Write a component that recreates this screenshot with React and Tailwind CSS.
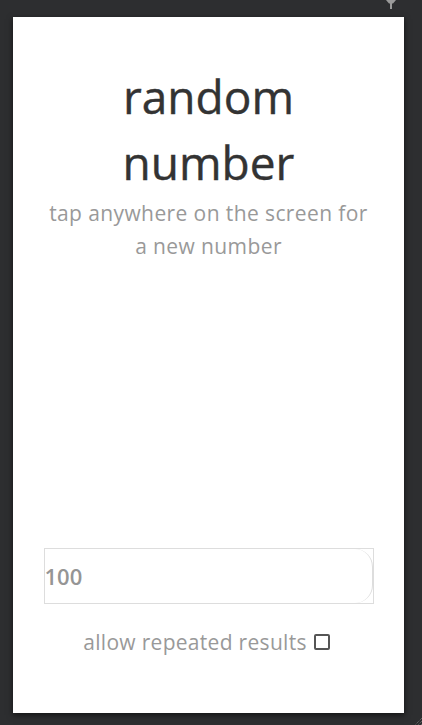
import React, { useState } from 'react';

const App = () => {
  const [max, setMax] = useState('100');
  const [repeat, setRepeat] = useState(false);

  return (
    <div className="relative w-[422px] h-[725px] bg-[#2d2e30] overflow-hidden" style={{ fontFamily: '"Open Sans", "Noto Sans", sans-serif' }}>

      {/* pin icon top right */}
      <svg className="absolute left-[385px] top-0 w-[12px] h-[9px]" viewBox="0 0 12 9">
        <path d="M1 0h10l-3 3.5h-1v5.5h-2v-5.5h-1z" fill="#9a9a9a" />
      </svg>

      {/* app panel */}
      <div className="ml-[13px] mt-[17px] w-[391px] h-[696px] bg-white shadow-[0_2px_6px_rgba(0,0,0,0.6)] flex flex-col items-center">

        <h1 className="mt-[46px] text-[46px] leading-[66px] text-[#333333] text-center font-normal [-webkit-text-stroke:0.4px_#333333]">
          random<br />number
        </h1>
        <p className="mt-[2px] w-[360px] text-[21px] leading-[33px] tracking-[0.4px] text-[#999999] text-center">
          tap anywhere on the screen for<br />a new number
        </p>

        <div className="flex-1" />

        {/* max number input */}
        <div className="w-[330px] h-[56px] border border-[#dddddd] flex">
          <input
            type="text"
            value={max}
            onChange={(e) => setMax(e.target.value)}
            className="w-full h-full rounded-r-[18px] border-r border-[#dddddd] pl-0 text-[22px] font-semibold text-[#959595] outline-none bg-transparent"
          />
        </div>

        {/* repeat toggle */}
        <label className="mt-[23px] mb-[55px] mr-[4px] flex items-center gap-[7px] text-[21px] tracking-[0.3px] text-[#999999] cursor-pointer">
          allow repeated results
          <span className={`w-[16px] h-[16px] border-2 border-[#555555] rounded-[2px] ${repeat ? 'bg-[#555555]' : 'bg-white'}`} />
          <input type="checkbox" className="hidden" checked={repeat} onChange={(e) => setRepeat(e.target.checked)} />
        </label>
      </div>

      {/* resize grip */}
      <svg className="absolute right-0 bottom-0 w-[8px] h-[8px]" viewBox="0 0 8 8">
        <path d="M8 1L1 8M8 4L4 8M8 7L7 8" stroke="#777" strokeWidth="1" strokeDasharray="1 1" />
      </svg>
    </div>
  );
};

export default App;
